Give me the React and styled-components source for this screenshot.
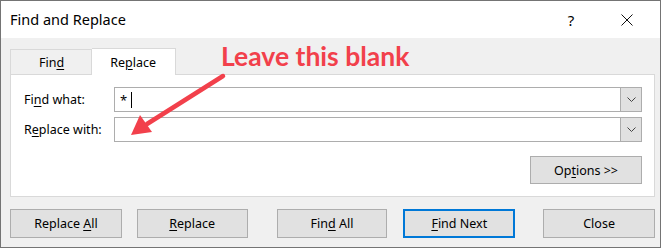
import React from "react";
import styled, { createGlobalStyle } from "styled-components";

const GlobalStyle = createGlobalStyle`
  html, body {
    margin: 0;
    padding: 0;
    background: #ffffff;
  }
  body {
    font-family: "Noto Sans", "Open Sans", sans-serif;
    font-size: 12px;
    color: #000;
  }
`;

const Window = styled.div`
  position: relative;
  width: 659px;
  height: 246px;
  border: 1px solid #747474;
  background: #f0f0f0;
  display: flex;
  flex-direction: column;
`;

const TitleBar = styled.div`
  height: 37px;
  background: #ffffff;
  display: flex;
  align-items: center;
  padding-left: 9px;
  box-sizing: border-box;
`;

const Title = styled.div`
  flex: 1;
  font-size: 14.5px;
  padding-bottom: 2px;
`;

const TitleButton = styled.div`
  width: ${(p) => p.$w}px;
  height: 37px;
  display: flex;
  align-items: center;
  justify-content: center;
  font-size: 15px;
`;

const Body = styled.div`
  flex: 1;
  padding: 9px 5px 0 9px;
  display: flex;
  flex-direction: column;
`;

const Tabs = styled.div`
  display: flex;
  align-items: flex-end;
  height: 27px;
`;

const Tab = styled.div`
  height: ${(p) => (p.$active ? 27 : 25)}px;
  box-sizing: border-box;
  padding: 0 ${(p) => (p.$active ? 19 : 27)}px 0 ${(p) => (p.$active ? 18 : 28)}px;
  display: flex;
  align-items: center;
  background: ${(p) => (p.$active ? "#ffffff" : "#f0f0f0")};
  border: 1px solid #d9d9d9;
  border-bottom: none;
  border-left: ${(p) => (p.$active ? "none" : "1px solid #d9d9d9")};
  margin-bottom: ${(p) => (p.$active ? -1 : 0)}px;
  position: relative;
  z-index: 1;
  font-size: 12.5px;
`;

const Panel = styled.div`
  width: 645px;
  box-sizing: border-box;
  background: #ffffff;
  border: 1px solid #d9d9d9;
  padding: 12px 12px 12px 13px;
  display: flex;
  flex-direction: column;
`;

const FieldRow = styled.div`
  display: flex;
  align-items: center;
  height: 25px;
  margin-bottom: 5px;
`;

const Label = styled.div`
  width: 90px;
  font-size: 12.5px;
`;

const Combo = styled.div`
  flex: 1;
  height: 25px;
  box-sizing: border-box;
  border: 1px solid #adadad;
  display: flex;
  background: #ffffff;
`;

const ComboText = styled.div`
  flex: 1;
  display: flex;
  align-items: center;
  padding-left: 5px;
  font-size: 13px;
`;

const Caret = styled.span`
  display: inline-block;
  width: 1px;
  height: 16px;
  background: #000;
  margin-left: 4px;
`;

const DropButton = styled.div`
  width: 20px;
  background: #e1e1e1;
  border-left: 1px solid #adadad;
  display: flex;
  align-items: center;
  justify-content: center;
`;

const OptionsRow = styled.div`
  display: flex;
  justify-content: flex-end;
  margin-top: 9px;
`;

const Button = styled.div`
  width: ${(p) => p.$w || 111}px;
  height: ${(p) => p.$h || 29}px;
  box-sizing: border-box;
  background: #e1e1e1;
  border: ${(p) => (p.$default ? "2px solid #0078d7" : "1px solid #adadad")};
  display: flex;
  align-items: center;
  justify-content: center;
  margin-left: ${(p) => p.$gap || 0}px;
  font-size: 12.5px;
  white-space: pre;
`;

const ButtonRow = styled.div`
  display: flex;
  margin-top: 12px;
`;

const Key = styled.span`
  text-decoration: underline;
  text-underline-offset: 2px;
`;

const Note = styled.div`
  position: absolute;
  left: 220px;
  top: 39px;
  font-family: Lato, "Noto Sans", sans-serif;
  font-weight: 700;
  font-size: 26.5px;
  color: #f2404b;
  white-space: nowrap;
`;

const ArrowLayer = styled.svg`
  position: absolute;
  left: 0;
  top: 0;
  pointer-events: none;
`;

const Chevron = () => (
  <svg width="9" height="5" viewBox="0 0 9 5">
    <path d="M0.5 0.5 L4.5 4.5 L8.5 0.5" fill="none" stroke="#444" strokeWidth="1" />
  </svg>
);

export default function App() {
  return (
    <>
      <GlobalStyle />
      <Window>
        <TitleBar>
          <Title>Find and Replace</Title>
          <TitleButton $w={46}>?</TitleButton>
          <TitleButton $w={66}>
            <svg width="12" height="12" viewBox="0 0 12 12">
              <path d="M0.5 0.5 L11.5 11.5 M11.5 0.5 L0.5 11.5" stroke="#111" strokeWidth="1" />
            </svg>
          </TitleButton>
        </TitleBar>
        <Body>
          <Tabs>
            <Tab>
              <span>
                Fin<Key>d</Key>
              </span>
            </Tab>
            <Tab $active>
              <span>
                Re<Key>p</Key>lace
              </span>
            </Tab>
          </Tabs>
          <Panel>
            <FieldRow>
              <Label>
                Fi<Key>n</Key>d what:
              </Label>
              <Combo>
                <ComboText>
                  *<Caret />
                </ComboText>
                <DropButton>
                  <Chevron />
                </DropButton>
              </Combo>
            </FieldRow>
            <FieldRow>
              <Label>
                R<Key>e</Key>place with:
              </Label>
              <Combo>
                <ComboText />
                <DropButton>
                  <Chevron />
                </DropButton>
              </Combo>
            </FieldRow>
            <OptionsRow>
              <Button $w={112} $h={28}>
                <span>
                  Op<Key>t</Key>ions &gt;&gt;
                </span>
              </Button>
            </OptionsRow>
          </Panel>
          <ButtonRow>
            <Button $w={112}>
              <span>
                Replace <Key>A</Key>ll
              </span>
            </Button>
            <Button $gap={15}>
              <span>
                <Key>R</Key>eplace
              </span>
            </Button>
            <Button $gap={29}>
              <span>
                Fin<Key>d</Key> All
              </span>
            </Button>
            <Button $gap={16} $w={112} $default>
              <span>
                <Key>F</Key>ind Next
              </span>
            </Button>
            <Button $gap={28} $w={112}>
              <span>Close</span>
            </Button>
          </ButtonRow>
        </Body>
        <Note>Leave this blank</Note>
        <ArrowLayer width="661" height="248" viewBox="0 0 661 248">
          <line x1="222" y1="75" x2="146" y2="123" stroke="#f2404b" strokeWidth="4.5" strokeLinecap="round" />
          <polygon points="130,134 139,114 151,131" fill="#f2404b" />
        </ArrowLayer>
      </Window>
    </>
  );
}
